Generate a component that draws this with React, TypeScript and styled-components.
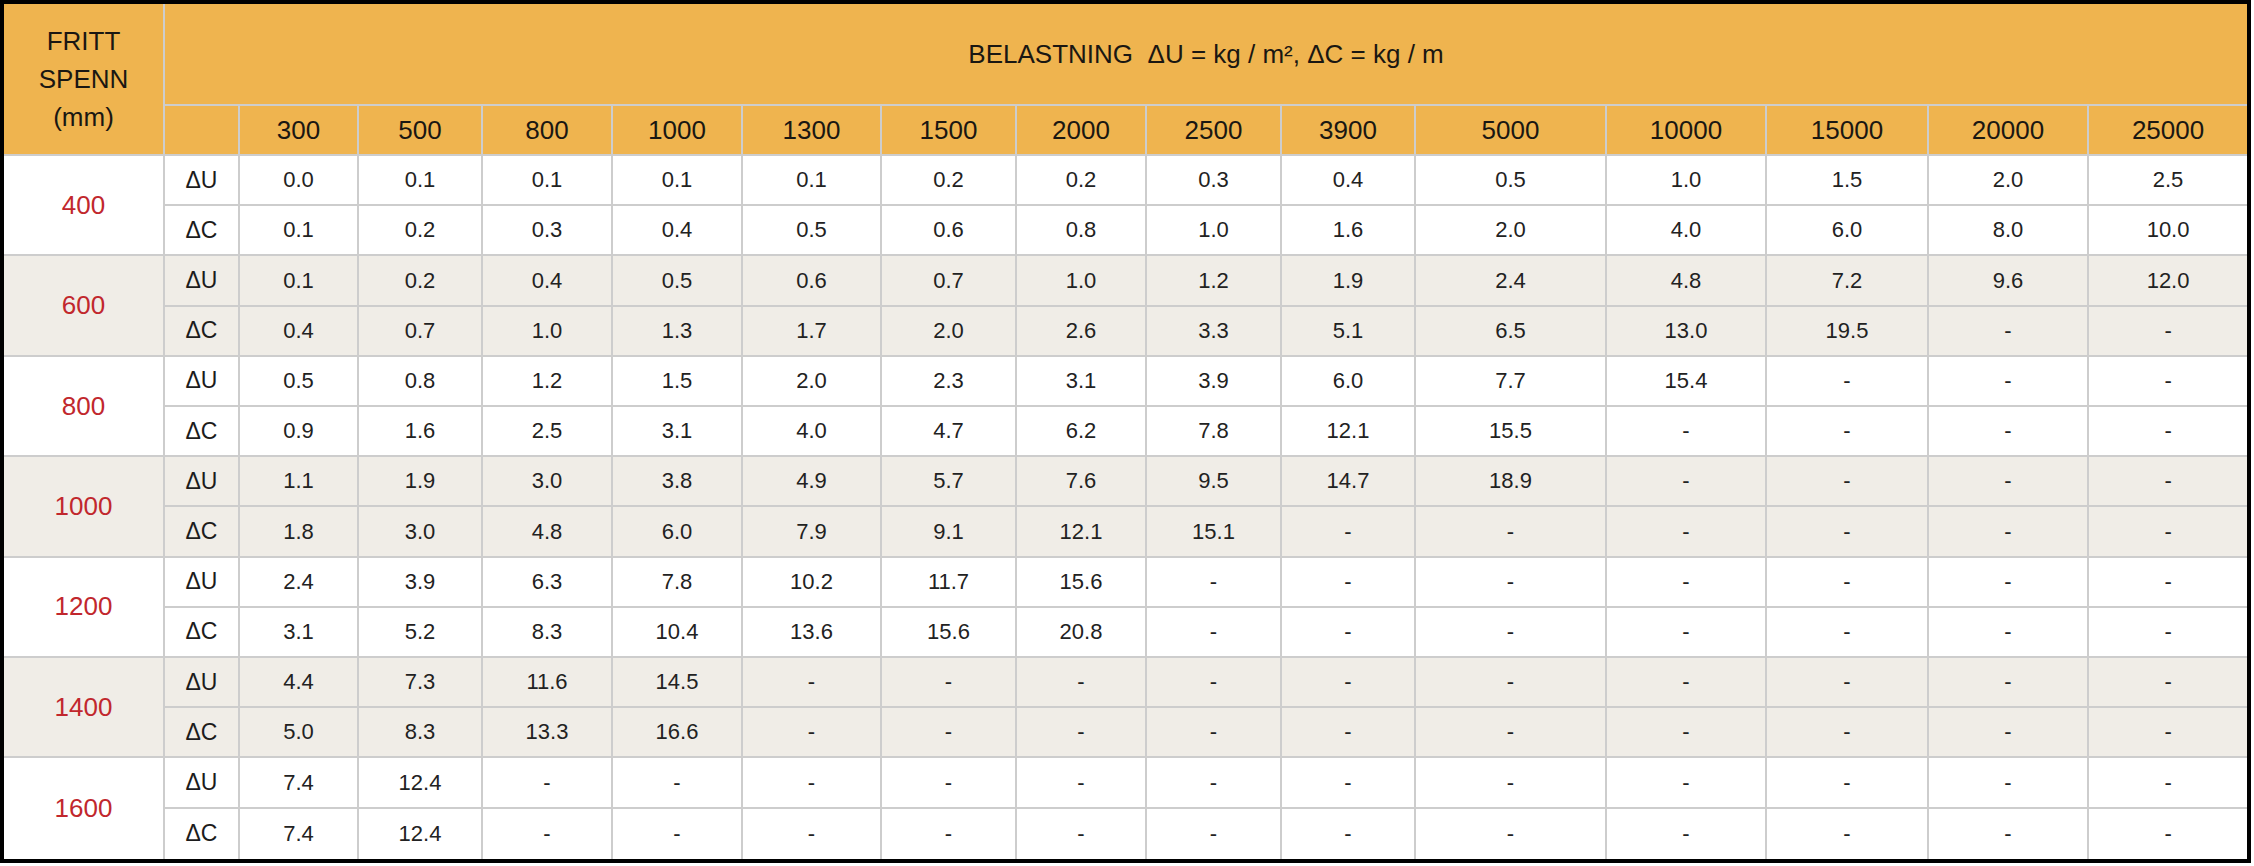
import styled, { createGlobalStyle } from 'styled-components';

const GlobalStyle = createGlobalStyle`
  html, body {
    margin: 0;
    padding: 0;
    background: #ffffff;
  }
  body {
    font-family: "Liberation Sans", Arial, sans-serif;
  }
`;

const columnWidths = [161, 75, 119, 124, 130, 130, 139, 135, 130, 135, 134, 191, 160, 162, 160, 158];

const loads = ['300', '500', '800', '1000', '1300', '1500', '2000', '2500', '3900', '5000', '10000', '15000', '20000', '25000'];

type Group = {
  span: string;
  u: string[];
  c: string[];
};

const fill = (values: string[]) => [...values, ...Array(14 - values.length).fill('-')];

const groups: Group[] = [
  {
    span: '400',
    u: ['0.0', '0.1', '0.1', '0.1', '0.1', '0.2', '0.2', '0.3', '0.4', '0.5', '1.0', '1.5', '2.0', '2.5'],
    c: ['0.1', '0.2', '0.3', '0.4', '0.5', '0.6', '0.8', '1.0', '1.6', '2.0', '4.0', '6.0', '8.0', '10.0'],
  },
  {
    span: '600',
    u: ['0.1', '0.2', '0.4', '0.5', '0.6', '0.7', '1.0', '1.2', '1.9', '2.4', '4.8', '7.2', '9.6', '12.0'],
    c: fill(['0.4', '0.7', '1.0', '1.3', '1.7', '2.0', '2.6', '3.3', '5.1', '6.5', '13.0', '19.5']),
  },
  {
    span: '800',
    u: fill(['0.5', '0.8', '1.2', '1.5', '2.0', '2.3', '3.1', '3.9', '6.0', '7.7', '15.4']),
    c: fill(['0.9', '1.6', '2.5', '3.1', '4.0', '4.7', '6.2', '7.8', '12.1', '15.5']),
  },
  {
    span: '1000',
    u: fill(['1.1', '1.9', '3.0', '3.8', '4.9', '5.7', '7.6', '9.5', '14.7', '18.9']),
    c: fill(['1.8', '3.0', '4.8', '6.0', '7.9', '9.1', '12.1', '15.1']),
  },
  {
    span: '1200',
    u: fill(['2.4', '3.9', '6.3', '7.8', '10.2', '11.7', '15.6']),
    c: fill(['3.1', '5.2', '8.3', '10.4', '13.6', '15.6', '20.8']),
  },
  {
    span: '1400',
    u: fill(['4.4', '7.3', '11.6', '14.5']),
    c: fill(['5.0', '8.3', '13.3', '16.6']),
  },
  {
    span: '1600',
    u: fill(['7.4', '12.4']),
    c: fill(['7.4', '12.4']),
  },
];

const App = () => {
  return (
    <>
      <GlobalStyle />
      <Table>
        <colgroup>
          {columnWidths.map((w, i) => (
            <col key={i} style={{ width: w }} />
          ))}
        </colgroup>
        <thead>
          <TitleRow>
            <HeadCell rowSpan={2}>
              <SpanTitle>
                FRITT
                <br />
                SPENN
                <br />
                (mm)
              </SpanTitle>
            </HeadCell>
            <HeadCell colSpan={15}>BELASTNING{'\u00a0'} ΔU = kg / m², ΔC = kg / m</HeadCell>
          </TitleRow>
          <LoadRow>
            <HeadCell />
            {loads.map((load) => (
              <HeadCell key={load}>{load}</HeadCell>
            ))}
          </LoadRow>
        </thead>
        <tbody>
          {groups.map((group, gi) => {
            const shaded = gi % 2 === 1;
            const last = gi === groups.length - 1;
            return [
              <DataRow key={group.span + 'u'} $shaded={shaded}>
                <SpanCell rowSpan={2} $last={last}>
                  {group.span}
                </SpanCell>
                <KindCell>ΔU</KindCell>
                {group.u.map((v, i) => (
                  <ValueCell key={i}>{v}</ValueCell>
                ))}
              </DataRow>,
              <DataRow key={group.span + 'c'} $shaded={shaded}>
                <KindCell>ΔC</KindCell>
                {group.c.map((v, i) => (
                  <ValueCell key={i}>{v}</ValueCell>
                ))}
              </DataRow>,
            ];
          })}
        </tbody>
      </Table>
    </>
  );
};

export default App;

const Table = styled.table`
  width: 2251px;
  table-layout: fixed;
  border-collapse: separate;
  border-spacing: 0;
  border: 4px solid #000000;
  color: #1c1c1c;

  td,
  th {
    box-sizing: border-box;
    padding: 0;
    text-align: center;
    vertical-align: middle;
    border-right: 2px solid #cdcdcd;
    border-bottom: 2px solid #cdcdcd;
  }

  tr > *:last-child {
    border-right: none;
  }

  tbody tr:last-child > * {
    border-bottom: none;
  }
`;

const TitleRow = styled.tr`
  height: 102px;
`;

const LoadRow = styled.tr`
  height: 50px;
`;

const HeadCell = styled.th`
  background: #efb44f;
  font-weight: normal;
  font-size: 26px;
  color: #1a1712;
  white-space: nowrap;
`;

const SpanTitle = styled.div`
  line-height: 38px;
`;

const DataRow = styled.tr<{ $shaded: boolean }>`
  height: 50.21px;
  background: ${(props) => (props.$shaded ? '#f0ede7' : '#ffffff')};
`;

const SpanCell = styled.td<{ $last: boolean }>`
  font-size: 26px;
  color: #c1272d;
  ${(props) => (props.$last ? 'border-bottom: none !important;' : '')}
`;

const KindCell = styled.td`
  font-size: 23px;
  color: #1c1c1c;
`;

const ValueCell = styled.td`
  font-size: 22px;
  color: #222222;
`;
